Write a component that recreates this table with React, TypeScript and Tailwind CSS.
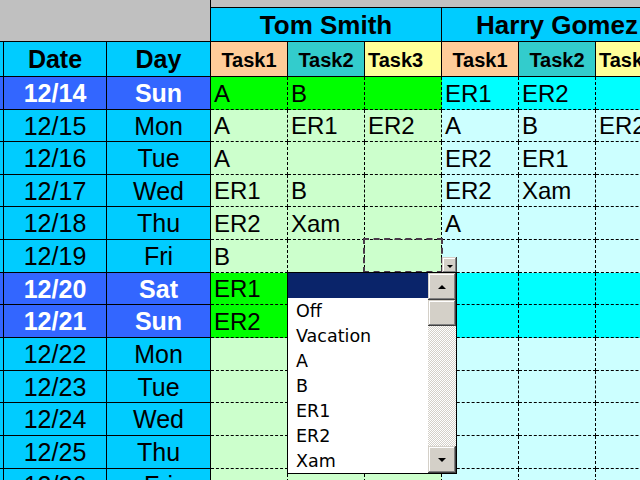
import React from "react";

type Row = { date: string; day: string; we: boolean; tom: string[]; harry: string[] };

const rows: Row[] = [
  { date: "12/14", day: "Sun", we: true, tom: ["A", "B", ""], harry: ["ER1", "ER2", ""] },
  { date: "12/15", day: "Mon", we: false, tom: ["A", "ER1", "ER2"], harry: ["A", "B", "ER2"] },
  { date: "12/16", day: "Tue", we: false, tom: ["A", "", ""], harry: ["ER2", "ER1", ""] },
  { date: "12/17", day: "Wed", we: false, tom: ["ER1", "B", ""], harry: ["ER2", "Xam", ""] },
  { date: "12/18", day: "Thu", we: false, tom: ["ER2", "Xam", ""], harry: ["A", "", ""] },
  { date: "12/19", day: "Fri", we: false, tom: ["B", "", ""], harry: ["", "", ""] },
  { date: "12/20", day: "Sat", we: true, tom: ["ER1", "", ""], harry: ["", "", ""] },
  { date: "12/21", day: "Sun", we: true, tom: ["ER2", "", ""], harry: ["", "", ""] },
  { date: "12/22", day: "Mon", we: false, tom: ["", "", ""], harry: ["", "", ""] },
  { date: "12/23", day: "Tue", we: false, tom: ["", "", ""], harry: ["", "", ""] },
  { date: "12/24", day: "Wed", we: false, tom: ["", "", ""], harry: ["", "", ""] },
  { date: "12/25", day: "Thu", we: false, tom: ["", "", ""], harry: ["", "", ""] },
  { date: "12/26", day: "Fri", we: false, tom: ["", "", ""], harry: ["", "", ""] },
];

const heights = [
  "h-[33px]",
  "h-[32px]",
  "h-[33px]",
  "h-[32px]",
  "h-[33px]",
  "h-[33px]",
  "h-[32px]",
  "h-[33px]",
  "h-[33px]",
  "h-[32px]",
  "h-[33px]",
  "h-[33px]",
  "h-[33px]",
];

const btn =
  "bg-[#d4d0c8] shadow-[inset_-1px_-1px_#404040,inset_1px_1px_#d4d0c8,inset_-2px_-2px_#808080,inset_2px_2px_#ffffff]";

function DataCell({ text, bg }: { text: string; bg: string }) {
  return (
    <div
      className={`w-[77px] shrink-0 h-full flex items-center pl-[3px] pt-[1px] border-r border-b border-dashed border-black text-[24px] text-black leading-none ${bg}`}
    >
      {text}
    </div>
  );
}

export default function App() {
  return (
    <div
      className="relative w-[640px] h-[480px] overflow-hidden bg-white"
      style={{ fontFamily: '"Liberation Sans", Arial, sans-serif' }}
    >
      {/* Top band */}
      <div className="flex h-[42px]">
        <div className="w-[211px] shrink-0 h-full bg-[#c0c0c0] border-r border-b border-black" />
        <div className="flex flex-col">
          <div className="h-[7px] bg-[#c0c0c0]" />
          <div className="flex h-[35px]">
            <div className="w-[231px] shrink-0 bg-[#00ccff] border-t border-b border-r border-black flex items-center justify-center text-[26px] font-bold leading-none">
              Tom Smith
            </div>
            <div className="w-[231px] shrink-0 bg-[#00ccff] border-t border-b border-r border-black flex items-center justify-center text-[26px] font-bold leading-none">
              Harry Gomez
            </div>
          </div>
        </div>
      </div>

      {/* Header row */}
      <div className="flex h-[35px]">
        <div className="w-[4px] shrink-0 bg-[#00ccff] border-r border-b border-black" />
        <div className="w-[103px] shrink-0 bg-[#00ccff] border-r border-b border-black flex items-center justify-center text-[25px] font-bold leading-none">
          Date
        </div>
        <div className="w-[104px] shrink-0 bg-[#00ccff] border-r border-b border-black flex items-center justify-center text-[25px] font-bold leading-none">
          Day
        </div>
        {[0, 1].map((k) => (
          <React.Fragment key={k}>
            <div className="w-[77px] shrink-0 bg-[#ffcc99] border-r border-b border-black flex items-center justify-center text-[20px] font-bold leading-none pt-[1px]">
              Task1
            </div>
            <div className="w-[77px] shrink-0 bg-[#33cccc] border-r border-b border-black flex items-center justify-center text-[20px] font-bold leading-none pt-[1px]">
              Task2
            </div>
            <div className="w-[77px] shrink-0 bg-[#ffff99] border-r border-b border-black flex items-center pl-[3px] text-[20px] font-bold leading-none pt-[1px]">
              Task3
            </div>
          </React.Fragment>
        ))}
      </div>

      {/* Data rows */}
      {rows.map((r, i) => {
        const dbg = r.we ? "bg-[#3366ff] text-white font-bold" : "bg-[#00ccff] text-black";
        const tbg = r.we ? "bg-[#00ff00]" : "bg-[#ccffcc]";
        const hbg = r.we ? "bg-[#00ffff]" : "bg-[#ccffff]";
        return (
          <div key={r.date} className={`flex ${heights[i]}`}>
            <div className={`w-[4px] shrink-0 border-r border-b border-black ${dbg}`} />
            <div
              className={`w-[103px] shrink-0 border-r border-b border-black flex items-center justify-center text-[25px] leading-none pt-[1px] ${dbg}`}
            >
              {r.date}
            </div>
            <div
              className={`w-[104px] shrink-0 border-r border-b border-black flex items-center justify-center text-[25px] leading-none pt-[1px] ${dbg}`}
            >
              {r.day}
            </div>
            {r.tom.map((t, j) => (
              <DataCell key={"t" + j} text={t} bg={tbg} />
            ))}
            {r.harry.map((t, j) => (
              <DataCell key={"h" + j} text={t} bg={hbg} />
            ))}
          </div>
        );
      })}

      {/* Selected cell */}
      <div className="absolute left-[363px] top-[238px] w-[80px] h-[35px] border-2 border-dashed border-[#4a3a4a]" />

      {/* Dropdown arrow button */}
      <div className={`absolute left-[442px] top-[257px] w-[15px] h-[16px] flex items-center justify-center ${btn}`}>
        <div className="w-0 h-0 border-l-[3px] border-r-[3px] border-t-[3px] border-l-transparent border-r-transparent border-t-black mt-[3px]" />
      </div>

      {/* Dropdown list */}
      <div
        className="absolute left-[287px] top-[272px] w-[170px] h-[202px] bg-white border border-black flex"
        style={{ fontFamily: '"DejaVu Sans", Tahoma, sans-serif' }}
      >
        <div className="w-[140px] flex flex-col">
          <div className="h-[25px] bg-[#0a246a]" />
          {["Off", "Vacation", "A", "B", "ER1", "ER2", "Xam"].map((o) => (
            <div key={o} className="h-[25px] flex items-center pl-[8px] pt-[3px] text-[17.5px] leading-none text-black">
              {o}
            </div>
          ))}
        </div>
        <div className="w-[28px] flex flex-col">
          <div className={`h-[27px] flex items-center justify-center ${btn}`}>
            <div className="w-0 h-0 border-l-[4px] border-r-[4px] border-b-[4px] border-l-transparent border-r-transparent border-b-black" />
          </div>
          <div className={`h-[26px] ${btn}`} />
          <div className="flex-1 bg-[repeating-conic-gradient(#d4d0c8_0%_25%,#ffffff_0%_50%)] bg-[length:2px_2px]" />
          <div className={`h-[27px] flex items-center justify-center ${btn}`}>
            <div className="w-0 h-0 border-l-[4px] border-r-[4px] border-t-[4px] border-l-transparent border-r-transparent border-t-black" />
          </div>
        </div>
      </div>
    </div>
  );
}
